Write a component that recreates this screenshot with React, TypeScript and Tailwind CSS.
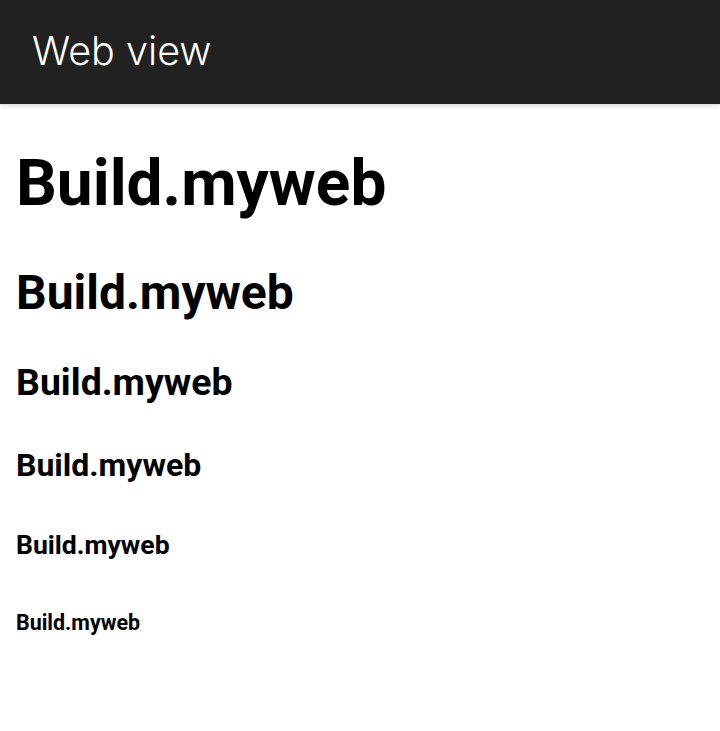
const headings = [
  { Tag: 'h1', cls: 'text-[64px] my-[42.9px]' },
  { Tag: 'h2', cls: 'text-[48px] my-[39.8px]' },
  { Tag: 'h3', cls: 'text-[37.44px] my-[37.4px]' },
  { Tag: 'h4', cls: 'text-[32px] my-[42.6px]' },
  { Tag: 'h5', cls: 'text-[26.56px] my-[44.4px]' },
  { Tag: 'h6', cls: 'text-[21.44px] my-[49.9px]' },
] as const;

export default function App() {
  return (
    <div className="min-h-[731px] bg-white font-['Roboto',sans-serif]">
      <header className="h-[104px] bg-[#212121] flex items-center pl-[32px] shadow-[0_2px_4px_rgba(0,0,0,0.15)] relative">
        <span className="text-white text-[39.5px] font-['Inter',sans-serif] font-light leading-none">Web view</span>
      </header>
      <main className="px-4 flow-root">
        {headings.map(({ Tag, cls }) => (
          <Tag key={Tag} className={`${cls} font-bold text-black leading-[1.171]`}>
            Build.myweb
          </Tag>
        ))}
      </main>
    </div>
  );
}
